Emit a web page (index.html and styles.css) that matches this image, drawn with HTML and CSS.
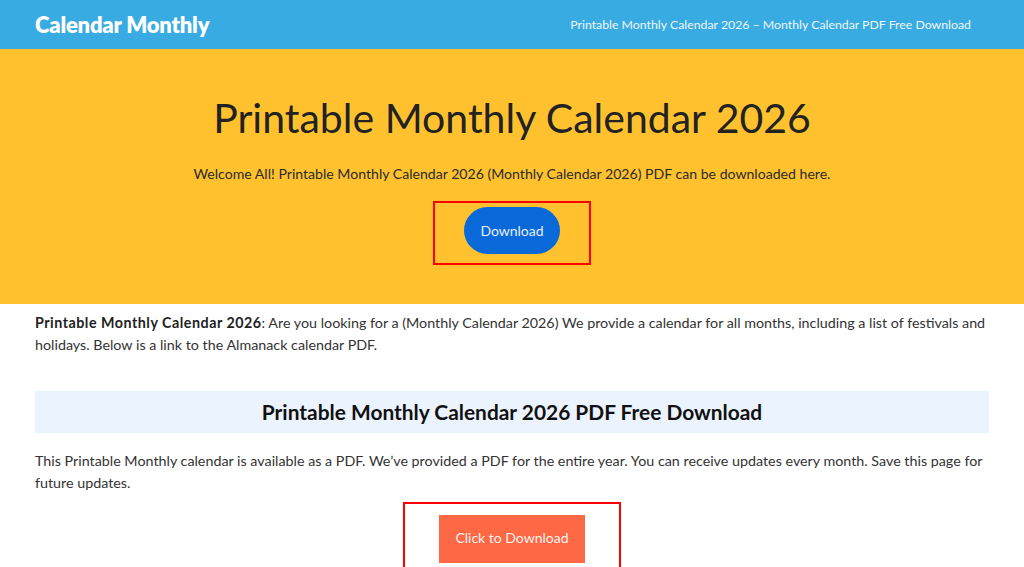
FILE: index.html
```html
<!DOCTYPE html>
<html lang="en">
<head>
<meta charset="utf-8">
<title>Printable Monthly Calendar 2026</title>
<link rel="stylesheet" href="styles.css">
</head>
<body>
<header class="site-header">
  <a class="logo" href="#">Calendar Monthly</a>
  <nav class="nav"><a href="#">Printable Monthly Calendar 2026 – Monthly Calendar PDF Free Download</a></nav>
</header>
<section class="hero">
  <h1 class="hero-title">Printable Monthly Calendar 2026</h1>
  <p class="hero-text">Welcome All! Printable Monthly Calendar 2026 (Monthly Calendar 2026) PDF can be downloaded here.</p>
  <div class="highlight highlight-hero">
    <a class="btn-pill" href="#">Download</a>
  </div>
</section>
<main class="content">
  <p class="intro"><strong>Printable Monthly Calendar 2026</strong>: Are you looking for a (Monthly Calendar 2026) We provide a calendar for all months, including a list of festivals and holidays. Below is a link to the Almanack calendar PDF.</p>
  <h2 class="section-title">Printable Monthly Calendar 2026 PDF Free Download</h2>
  <p class="body-text">This Printable Monthly calendar is available as a PDF. We’ve provided a PDF for the entire year. You can receive updates every month. Save this page for future updates.</p>
  <div class="center">
    <div class="highlight highlight-main">
      <a class="btn-rect" href="#">Click to Download</a>
    </div>
  </div>
</main>
</body>
</html>
```
FILE: styles.css
```css
* { box-sizing: border-box; }
html, body { margin: 0; padding: 0; }
body {
  font-family: "Lato", "Open Sans", sans-serif;
  color: #333;
  background: #fff;
  overflow: hidden;
}
a { text-decoration: none; }

.site-header {
  height: 49px;
  background: #38ace2;
  display: flex;
  align-items: center;
  justify-content: space-between;
  padding: 0 53px 0 35px;
}
.logo {
  color: #fff;
  font-weight: 800;
  font-size: 22px;
  letter-spacing: -0.2px;
}
.nav {
  padding-bottom: 5px;
}
.nav a {
  color: #eef6fc;
  font-size: 12.3px;
}

.hero {
  background: #ffc22e;
  text-align: center;
  padding: 42px 0 39px;
}
.hero-title {
  margin: 0;
  font-size: 41px;
  line-height: 53px;
  font-weight: 400;
  color: #222;
}
.hero-text {
  margin: 18px 0 0;
  font-size: 14.1px;
  line-height: 24px;
  color: #2b2b2b;
}
.highlight {
  display: inline-block;
  border: 2px solid #ff0000;
}
.highlight-hero {
  margin-top: 15px;
  padding: 4px 29px 9px;
}
.btn-pill {
  display: flex;
  align-items: center;
  justify-content: center;
  width: 96px;
  height: 47px;
  border-radius: 24px;
  background: #0a69d8;
  color: #e6eefa;
  font-size: 14px;
}

.content {
  padding: 8px 35px 0;
}
.intro, .body-text {
  margin: 0;
  font-size: 14.3px;
  line-height: 22px;
  color: #333;
}
.intro strong {
  color: #222;
  font-weight: 700;
  letter-spacing: 0.5px;
}
.section-title {
  margin: 35px 0 17px;
  background: #ebf3fe;
  text-align: center;
  font-size: 20.9px;
  line-height: 42px;
  font-weight: 700;
  color: #111;
}
.center {
  text-align: center;
  margin-top: 8px;
}
.highlight-main {
  padding: 11px 34px 8px;
}
.btn-rect {
  display: flex;
  align-items: center;
  justify-content: center;
  width: 146px;
  height: 48px;
  background: #ff6845;
  color: #fff3ef;
  font-size: 14px;
  padding-bottom: 3px;
}
```
